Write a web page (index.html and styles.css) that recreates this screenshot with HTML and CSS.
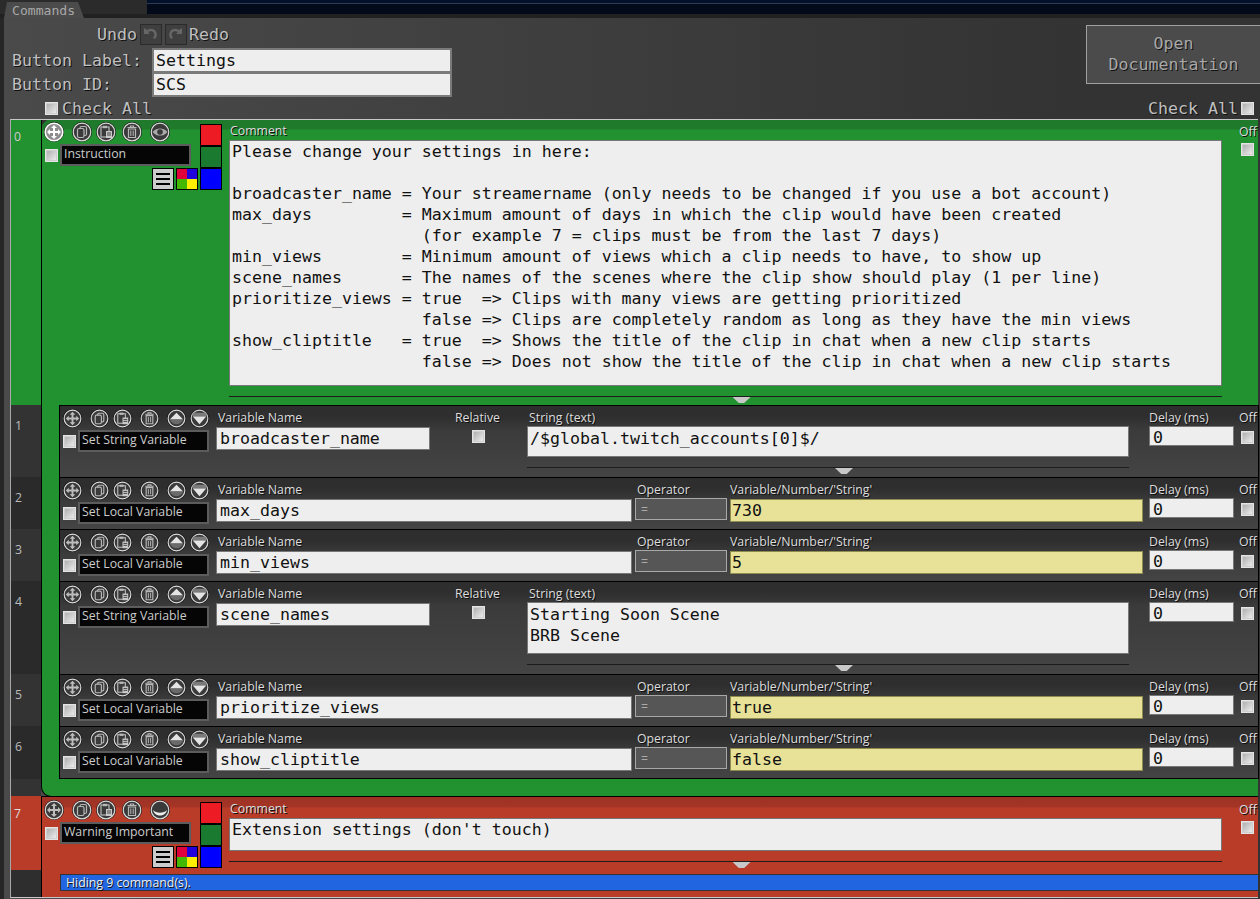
FILE: index.html
```html
<!DOCTYPE html>
<html lang="en">
<head>
    <meta charset="UTF-8">
    <title>Commands</title>
    <link rel="stylesheet" href="styles.css">
</head>
<body>
    <svg class="defs" width="0" height="0">
        <defs>
            <g id="base">
                <circle cx="10" cy="10" r="10" fill="#111"/>
                <circle cx="10" cy="10" r="8.800" fill="#3a3a3a" stroke="#dcdcdc" stroke-width="1.200"/>
            </g>
            <symbol id="i-move" viewBox="0 0 20 20">
                <use href="#base"/>
                <path d="M10 3l3 3h-2v3h3V7l3 3-3 3v-2h-3v3h2l-3 3-3-3h2v-3H6v2l-3-3 3-3v2h3V6H7z" fill="#bdbdbd"/>
            </symbol>
            <symbol id="i-move-on" viewBox="0 0 20 20">
                <circle cx="10" cy="10" r="10" fill="#111"/>
                <circle cx="10" cy="10" r="8.800" fill="#8d8d8d" stroke="#fff" stroke-width="1.600"/>
                <path d="M10 3l3 3h-2v3h3V7l3 3-3 3v-2h-3v3h2l-3 3-3-3h2v-3H6v2l-3-3 3-3v2h3V6H7z" fill="#fff"/>
            </symbol>
            <symbol id="i-copy" viewBox="0 0 20 20">
                <use href="#base"/>
                <rect x="8" y="4.500" width="6.500" height="9" rx="1.500" fill="none" stroke="#b8b8b8" stroke-width="1.200"/>
                <rect x="5.500" y="6.500" width="6.500" height="9" rx="1.500" fill="#3a3a3a" stroke="#b8b8b8" stroke-width="1.200"/>
            </symbol>
            <symbol id="i-paste" viewBox="0 0 20 20">
                <use href="#base"/>
                <rect x="5" y="5" width="8" height="10" fill="none" stroke="#b8b8b8" stroke-width="1.200"/>
                <rect x="7" y="3.800" width="4" height="2.400" fill="#b8b8b8"/>
                <rect x="10" y="9" width="6" height="7" fill="#c8c8c8"/>
                <path d="M11 11h4M11 13h4" stroke="#444"/>
            </symbol>
            <symbol id="i-trash" viewBox="0 0 20 20">
                <use href="#base"/>
                <path d="M8.500 5V4h3v1M5.500 5.500h9" fill="none" stroke="#b8b8b8" stroke-width="1.200"/>
                <path d="M6.500 7h7v8.500h-7z" fill="none" stroke="#b8b8b8" stroke-width="1.200"/>
                <path d="M8.800 8.500v5.500M11.200 8.500v5.500" stroke="#b8b8b8"/>
            </symbol>
            <symbol id="i-eye" viewBox="0 0 20 20">
                <use href="#base"/>
                <path d="M2.500 10C5 7 7.500 6.500 10 6.500s5 .5 7.500 3.500c-2.500 3-5 3.500-7.500 3.500s-5-.5-7.500-3.500z" fill="#aaa"/>
                <circle cx="10" cy="10" r="2.800" fill="#3a3a3a"/>
            </symbol>
            <symbol id="i-fold" viewBox="0 0 20 20">
                <use href="#base"/>
                <path d="M3 10c3 3.500 11 3.500 14 0-1 4-4 5.500-7 5.500s-6-1.500-7-5.500z" fill="#eee"/>
            </symbol>
            <symbol id="i-up" viewBox="0 0 20 20">
                <use href="#base"/>
                <path d="M10 4l7 7H3z" fill="#e4e4e4"/>
                <path d="M3 11h14c-1 3-4 5-7 5s-6-2-7-5z" fill="#6a6a6a"/>
            </symbol>
            <symbol id="i-down" viewBox="0 0 20 20">
                <use href="#base"/>
                <path d="M3 4h14c.5 1.500.5 3 0 4H3c-.5-1-.5-2.500 0-4z" fill="#7a7a7a"/>
                <path d="M3 8h14l-7 8z" fill="#e4e4e4"/>
            </symbol>
        </defs>
    </svg>

    <div class="topbar">
        <div class="tab">Commands</div>
        <div class="topbar-right"></div>
    </div>

    <div class="panel">
        <div class="header">
            <div class="header-left">
                <div class="undo-row">
                    <span class="mono-label">Undo</span>
                    <span class="hist-btn"><svg width="17" height="17" viewBox="0 0 17 17"><path d="M2 2v6h6L6 6c2-1.500 5-1 6 1 .7 1.500.3 3-1 5l2 1c2-2.500 2.500-5 1-7.500C12 2 8 2 5 4z" fill="#666"/></svg></span>
                    <span class="hist-btn"><svg width="17" height="17" viewBox="0 0 17 17"><path d="M15 2v6H9l2-2C9 4.500 6 5 5 7c-.7 1.500-.3 3 1 5l-2 1C2 10.500 1.500 8 3 5.500 5 2 9 2 12 4z" fill="#666"/></svg></span>
                    <span class="mono-label">Redo</span>
                </div>
                <div class="name-row">
                    <span class="mono-label name-label">Button Label:</span>
                    <div class="name-input">Settings</div>
                </div>
                <div class="name-row">
                    <span class="mono-label name-label">Button ID:</span>
                    <div class="name-input">SCS</div>
                </div>
                <div class="check-all">
                    <input type="checkbox" class="check">
                    <span class="mono-label">Check All</span>
                </div>
            </div>
            <div class="header-right">
                <div class="doc-btn">Open<br>Documentation</div>
                <div class="check-all">
                    <span class="mono-label">Check All</span>
                    <input type="checkbox" class="check">
                </div>
            </div>
        </div>

        <div class="cmd-list">
            <div class="row">
                <div class="num num-green">0</div>
                <div class="main main-green">
                    <span class="corner"></span>
                    <div class="main-top">
                        <div class="tools-main">
                            <div class="icons icons-main">
                                <svg class="ic"><use href="#i-move-on"/></svg>
                                <svg class="ic sep"><use href="#i-copy"/></svg>
                                <svg class="ic"><use href="#i-paste"/></svg>
                                <svg class="ic sep2"><use href="#i-trash"/></svg>
                                <svg class="ic sep"><use href="#i-eye"/></svg>
                            </div>
                            <div class="type-row">
                                <input type="checkbox" class="check">
                                <div class="type-select">Instruction</div>
                            </div>
                            <div class="style-row">
                                <span class="menu-btn"><i></i><i></i><i></i></span>
                                <span class="color-grid"><i class="c1"></i><i class="c2"></i><i class="c3"></i><i class="c4"></i></span>
                            </div>
                        </div>
                        <div class="swatches">
                            <span class="sw sw-red"></span>
                            <span class="sw sw-green"></span>
                            <span class="sw sw-blue"></span>
                        </div>
                        <div class="comment">
                            <div class="label">Comment</div>
                            <div class="text-box box-long">Please change your settings in here:

broadcaster_name = Your streamername (only needs to be changed if you use a bot account)
max_days         = Maximum amount of days in which the clip would have been created
                   (for example 7 = clips must be from the last 7 days)
min_views        = Minimum amount of views which a clip needs to have, to show up
scene_names      = The names of the scenes where the clip show should play (1 per line)
prioritize_views = true  =&gt; Clips with many views are getting prioritized
                   false =&gt; Clips are completely random as long as they have the min views
show_cliptitle   = true  =&gt; Shows the title of the clip in chat when a new clip starts
                   false =&gt; Does not show the title of the clip in chat when a new clip starts</div>
                            <div class="divider"></div>
                        </div>
                        <div class="off off-main">
                            <div class="label">Off</div>
                            <input type="checkbox" class="check">
                        </div>
                    </div>
                </div>
            </div>

            <div class="row">
                <div class="num num-a">1</div>
                <div class="gutter"></div>
                <div class="sub">
                    <div class="tools">
                        <div class="icons">
                            <svg class="ic-s"><use href="#i-move"/></svg>
                            <svg class="ic-s sep"><use href="#i-copy"/></svg>
                            <svg class="ic-s"><use href="#i-paste"/></svg>
                            <svg class="ic-s sep"><use href="#i-trash"/></svg>
                            <svg class="ic-s sep"><use href="#i-up"/></svg>
                            <svg class="ic-s"><use href="#i-down"/></svg>
                        </div>
                        <div class="type-row">
                            <input type="checkbox" class="check">
                            <div class="type-select">Set String Variable</div>
                        </div>
                    </div>
                    <div class="field f-var-short">
                        <div class="label">Variable Name</div>
                        <div class="input">broadcaster_name</div>
                    </div>
                    <div class="field f-relative">
                        <div class="label">Relative</div>
                        <input type="checkbox" class="check">
                    </div>
                    <div class="field f-string">
                        <div class="label">String (text)</div>
                        <div class="text-box">/$global.twitch_accounts[0]$/</div>
                        <div class="divider"></div>
                    </div>
                    <div class="field f-delay">
                        <div class="label">Delay (ms)</div>
                        <div class="input delay-input">0</div>
                    </div>
                    <div class="off">
                        <div class="label">Off</div>
                        <input type="checkbox" class="check">
                    </div>
                </div>
            </div>

            <div class="row">
                <div class="num num-b">2</div>
                <div class="gutter"></div>
                <div class="sub">
                    <div class="tools">
                        <div class="icons">
                            <svg class="ic-s"><use href="#i-move"/></svg>
                            <svg class="ic-s sep"><use href="#i-copy"/></svg>
                            <svg class="ic-s"><use href="#i-paste"/></svg>
                            <svg class="ic-s sep"><use href="#i-trash"/></svg>
                            <svg class="ic-s sep"><use href="#i-up"/></svg>
                            <svg class="ic-s"><use href="#i-down"/></svg>
                        </div>
                        <div class="type-row">
                            <input type="checkbox" class="check">
                            <div class="type-select">Set Local Variable</div>
                        </div>
                    </div>
                    <div class="field f-var">
                        <div class="label">Variable Name</div>
                        <div class="input">max_days</div>
                    </div>
                    <div class="field f-op">
                        <div class="label">Operator</div>
                        <div class="op-select">=</div>
                    </div>
                    <div class="field f-value">
                        <div class="label">Variable/Number/'String'</div>
                        <div class="input input-yellow">730</div>
                    </div>
                    <div class="field f-delay">
                        <div class="label">Delay (ms)</div>
                        <div class="input delay-input">0</div>
                    </div>
                    <div class="off">
                        <div class="label">Off</div>
                        <input type="checkbox" class="check">
                    </div>
                </div>
            </div>

            <div class="row">
                <div class="num num-a">3</div>
                <div class="gutter"></div>
                <div class="sub">
                    <div class="tools">
                        <div class="icons">
                            <svg class="ic-s"><use href="#i-move"/></svg>
                            <svg class="ic-s sep"><use href="#i-copy"/></svg>
                            <svg class="ic-s"><use href="#i-paste"/></svg>
                            <svg class="ic-s sep"><use href="#i-trash"/></svg>
                            <svg class="ic-s sep"><use href="#i-up"/></svg>
                            <svg class="ic-s"><use href="#i-down"/></svg>
                        </div>
                        <div class="type-row">
                            <input type="checkbox" class="check">
                            <div class="type-select">Set Local Variable</div>
                        </div>
                    </div>
                    <div class="field f-var">
                        <div class="label">Variable Name</div>
                        <div class="input">min_views</div>
                    </div>
                    <div class="field f-op">
                        <div class="label">Operator</div>
                        <div class="op-select">=</div>
                    </div>
                    <div class="field f-value">
                        <div class="label">Variable/Number/'String'</div>
                        <div class="input input-yellow">5</div>
                    </div>
                    <div class="field f-delay">
                        <div class="label">Delay (ms)</div>
                        <div class="input delay-input">0</div>
                    </div>
                    <div class="off">
                        <div class="label">Off</div>
                        <input type="checkbox" class="check">
                    </div>
                </div>
            </div>

            <div class="row">
                <div class="num num-b">4</div>
                <div class="gutter"></div>
                <div class="sub">
                    <div class="tools">
                        <div class="icons">
                            <svg class="ic-s"><use href="#i-move"/></svg>
                            <svg class="ic-s sep"><use href="#i-copy"/></svg>
                            <svg class="ic-s"><use href="#i-paste"/></svg>
                            <svg class="ic-s sep"><use href="#i-trash"/></svg>
                            <svg class="ic-s sep"><use href="#i-up"/></svg>
                            <svg class="ic-s"><use href="#i-down"/></svg>
                        </div>
                        <div class="type-row">
                            <input type="checkbox" class="check">
                            <div class="type-select">Set String Variable</div>
                        </div>
                    </div>
                    <div class="field f-var-short">
                        <div class="label">Variable Name</div>
                        <div class="input">scene_names</div>
                    </div>
                    <div class="field f-relative">
                        <div class="label">Relative</div>
                        <input type="checkbox" class="check">
                    </div>
                    <div class="field f-string">
                        <div class="label">String (text)</div>
                        <div class="text-box">Starting Soon Scene
BRB Scene</div>
                        <div class="divider"></div>
                    </div>
                    <div class="field f-delay">
                        <div class="label">Delay (ms)</div>
                        <div class="input delay-input">0</div>
                    </div>
                    <div class="off">
                        <div class="label">Off</div>
                        <input type="checkbox" class="check">
                    </div>
                </div>
            </div>

            <div class="row">
                <div class="num num-a">5</div>
                <div class="gutter"></div>
                <div class="sub">
                    <div class="tools">
                        <div class="icons">
                            <svg class="ic-s"><use href="#i-move"/></svg>
                            <svg class="ic-s sep"><use href="#i-copy"/></svg>
                            <svg class="ic-s"><use href="#i-paste"/></svg>
                            <svg class="ic-s sep"><use href="#i-trash"/></svg>
                            <svg class="ic-s sep"><use href="#i-up"/></svg>
                            <svg class="ic-s"><use href="#i-down"/></svg>
                        </div>
                        <div class="type-row">
                            <input type="checkbox" class="check">
                            <div class="type-select">Set Local Variable</div>
                        </div>
                    </div>
                    <div class="field f-var">
                        <div class="label">Variable Name</div>
                        <div class="input">prioritize_views</div>
                    </div>
                    <div class="field f-op">
                        <div class="label">Operator</div>
                        <div class="op-select">=</div>
                    </div>
                    <div class="field f-value">
                        <div class="label">Variable/Number/'String'</div>
                        <div class="input input-yellow">true</div>
                    </div>
                    <div class="field f-delay">
                        <div class="label">Delay (ms)</div>
                        <div class="input delay-input">0</div>
                    </div>
                    <div class="off">
                        <div class="label">Off</div>
                        <input type="checkbox" class="check">
                    </div>
                </div>
            </div>

            <div class="row">
                <div class="num num-b">6</div>
                <div class="gutter"></div>
                <div class="sub sub-last">
                    <div class="tools">
                        <div class="icons">
                            <svg class="ic-s"><use href="#i-move"/></svg>
                            <svg class="ic-s sep"><use href="#i-copy"/></svg>
                            <svg class="ic-s"><use href="#i-paste"/></svg>
                            <svg class="ic-s sep"><use href="#i-trash"/></svg>
                            <svg class="ic-s sep"><use href="#i-up"/></svg>
                            <svg class="ic-s"><use href="#i-down"/></svg>
                        </div>
                        <div class="type-row">
                            <input type="checkbox" class="check">
                            <div class="type-select">Set Local Variable</div>
                        </div>
                    </div>
                    <div class="field f-var">
                        <div class="label">Variable Name</div>
                        <div class="input">show_cliptitle</div>
                    </div>
                    <div class="field f-op">
                        <div class="label">Operator</div>
                        <div class="op-select">=</div>
                    </div>
                    <div class="field f-value">
                        <div class="label">Variable/Number/'String'</div>
                        <div class="input input-yellow">false</div>
                    </div>
                    <div class="field f-delay">
                        <div class="label">Delay (ms)</div>
                        <div class="input delay-input">0</div>
                    </div>
                    <div class="off">
                        <div class="label">Off</div>
                        <input type="checkbox" class="check">
                    </div>
                </div>
            </div>

            <div class="row row-tail">
                <div class="num num-a"></div>
                <div class="tail"></div>
            </div>

            <div class="row">
                <div class="num num-a num-split"><div class="num-red">7</div></div>
                <div class="main main-red">
                    <div class="main-top">
                        <div class="tools-main">
                            <div class="icons icons-main">
                                <svg class="ic"><use href="#i-move"/></svg>
                                <svg class="ic sep"><use href="#i-copy"/></svg>
                                <svg class="ic"><use href="#i-paste"/></svg>
                                <svg class="ic sep2"><use href="#i-trash"/></svg>
                                <svg class="ic sep"><use href="#i-fold"/></svg>
                            </div>
                            <div class="type-row">
                                <input type="checkbox" class="check">
                                <div class="type-select">Warning Important</div>
                            </div>
                            <div class="style-row">
                                <span class="menu-btn"><i></i><i></i><i></i></span>
                                <span class="color-grid"><i class="c1"></i><i class="c2"></i><i class="c3"></i><i class="c4"></i></span>
                            </div>
                        </div>
                        <div class="swatches">
                            <span class="sw sw-red"></span>
                            <span class="sw sw-green"></span>
                            <span class="sw sw-blue"></span>
                        </div>
                        <div class="comment">
                            <div class="label">Comment</div>
                            <div class="text-box box-mid">Extension settings (don't touch)</div>
                            <div class="divider"></div>
                        </div>
                        <div class="off off-main">
                            <div class="label">Off</div>
                            <input type="checkbox" class="check">
                        </div>
                    </div>
                    <div class="hiding">Hiding 9 command(s).</div>
                </div>
            </div>
        </div>
    </div>
</body>
</html>
```

FILE: styles.css
```css
* {
    box-sizing: border-box;
}
html, body {
    margin: 0;
    height: 100%;
    overflow: hidden;
}
body {
    width: 1260px;
    height: 899px;
    background-color: #262626;
    font-family: "Open Sans", sans-serif;
    font-size: 12.3px;
    color: #ccc;
}
.defs {
    position: absolute;
}

/* top strip */
.topbar {
    display: flex;
    height: 18px;
    background: linear-gradient(#2b2b2b 0, #2b2b2b 14px, #212121 14px);
    position: relative;
}
.tab {
    width: 80px;
    height: 16px;
    margin: 2px 0 0 4px;
    padding-left: 8px;
    background-color: #4b4b4b;
    clip-path: polygon(3px 0, 74px 0, 80px 100%, 0 100%);
    font-family: "DejaVu Sans Mono", monospace;
    font-size: 13.1px;
    line-height: 17px;
    color: #a8a8a8;
}
.topbar-right {
    position: absolute;
    left: 147px;
    right: 0;
    top: 0;
    height: 14px;
    background: linear-gradient(#03102a 0, #03102a 3px, #2c3c52 3px, #2c3c52 4px, #030a1a 4px);
}

/* panel */
.panel {
    height: 881px;
    margin-left: 4px;
    padding-left: 6px;
    background: linear-gradient(to right, #4a4a4a, #333 85%);
}
.header {
    display: flex;
    justify-content: space-between;
    height: 101px;
    margin-left: -6px;
}
.header-left {
    padding-left: 8px;
}
.mono-label {
    font-family: "DejaVu Sans Mono", monospace;
    font-size: 16.6px;
    color: #c0c0c0;
    text-shadow: 1px 1px 0 #111;
}
.undo-row {
    display: flex;
    align-items: center;
    gap: 3px;
    height: 21px;
    margin: 6px 0 3px 85px;
}
.undo-row .hist-btn + .mono-label {
    margin-left: -1px;
}
.hist-btn {
    display: flex;
    align-items: center;
    justify-content: center;
    width: 22px;
    height: 21px;
    background-color: #3f3f3f;
    border: 1px solid #2b2b2b;
}
.name-row {
    display: flex;
    align-items: center;
    height: 24px;
}
.name-label {
    width: 141px;
    margin-right: -1px;
}
.name-input {
    width: 300px;
    height: 25px;
    margin-bottom: -1px;
    padding-left: 2px;
    background-color: #eee;
    border: 2px solid #7a7a7a;
    font-family: "DejaVu Sans Mono", monospace;
    font-size: 16.6px;
    line-height: 21px;
    color: #111;
}
.check-all {
    display: flex;
    align-items: center;
    gap: 4px;
    height: 21px;
    margin: 2px 0 0 33px;
}
.header-right {
    display: flex;
    flex-direction: column;
    align-items: flex-end;
}
.doc-btn {
    width: 174px;
    height: 59px;
    margin-top: 7px;
    padding-top: 7px;
    background-color: #4b4b4b;
    border: 1px solid #a0a0a0;
    border-right: 0;
    font-family: "DejaVu Sans Mono", monospace;
    font-size: 16.6px;
    line-height: 21px;
    text-align: center;
    color: #a8a8a8;
    text-shadow: 1px 1px 0 #111;
}
.header-right .check-all {
    margin: 14px 6px 0 0;
    gap: 3px;
}
.check {
    appearance: none;
    display: block;
    flex: none;
    width: 13px;
    height: 13px;
    margin: 0;
    background: linear-gradient(135deg, #a9a9a9, #f2f2f2);
    border: 1px solid #e4e4e4;
    box-shadow: inset 0 0 0 1px #cfcfcf;
}

/* command list */
.cmd-list {
    width: 1248px;
    border-top: 1px solid #c8c8c8;
    border-left: 1px solid #a8a8a8;
    border-bottom: 1px solid #c8c8c8;
}
.row {
    display: flex;
}
.num {
    flex: none;
    width: 30px;
    padding: 14px 0 0 4px;
    line-height: 14px;
    color: #bbb;
}
.num-green {
    background-color: #22912f;
    color: #ccc;
    padding: 10px 0 0 3px;
}
.num-a {
    background-color: #333;
}
.num-b {
    background-color: #2a2a2a;
}
.num-split {
    padding: 0;
    background-color: #2e2e2e;
}
.num-red {
    height: 74px;
    padding: 11px 0 0 3px;
    background-color: #b93c29;
    color: #ddd;
}
.main {
    position: relative;
    flex: 1;
    border-left: 1px solid #000;
    padding: 2px 0 0 2px;
}
.main-green {
    background: linear-gradient(#1f7a2b 0, #1f7a2b 9px, #22912f 10px);
}
.main-red {
    padding-top: 3px;
    padding-bottom: 6px;
    border-top: 1px solid #000;
    background: linear-gradient(#9c3225 0, #a53526 10px, #b93c29 11px);
}
.corner {
    position: absolute;
    left: 0;
    top: 0;
    width: 5px;
    height: 5px;
    background-color: #333;
    clip-path: polygon(0 0, 100% 0, 0 100%);
}
.main-top {
    display: flex;
}
.tools-main {
    flex: none;
    width: 156px;
}
.icons {
    display: flex;
    gap: 4px;
}
.icons-main {
    height: 20px;
}
.ic {
    width: 20px;
    height: 20px;
}
.ic-s {
    width: 19px;
    height: 19px;
}
.sep {
    margin-left: 4px;
}
.sep2 {
    margin-left: 2px;
}
.type-row {
    display: flex;
    align-items: center;
    gap: 2px;
    margin-top: 2px;
}
.tools-main .type-row {
    padding-left: 1px;
}
.type-select {
    width: 131px;
    height: 22px;
    padding-left: 2px;
    background-color: #050505;
    border: 2px solid #5c5c5c;
    line-height: 16px;
    color: #ccc;
    white-space: nowrap;
}
.style-row {
    display: flex;
    justify-content: flex-end;
    gap: 2px;
    margin-top: 2px;
    padding-right: 2px;
}
.menu-btn {
    display: flex;
    flex-direction: column;
    justify-content: center;
    gap: 3px;
    width: 22px;
    height: 22px;
    padding: 0 3px;
    background-color: #ccc;
    border: 1px solid #000;
}
.menu-btn i {
    display: block;
    height: 2px;
    background-color: #000;
}
.color-grid {
    display: grid;
    grid-template-columns: 1fr 1fr;
    width: 22px;
    height: 22px;
    border: 1px solid #000;
}
.c1 { background-color: #e0003c; }
.c2 { background-color: #2200dd; }
.c3 { background-color: #44b800; }
.c4 { background-color: #ffee00; }
.swatches {
    display: flex;
    flex-direction: column;
    flex: none;
    width: 22px;
    margin-top: 2px;
}
.sw {
    display: block;
    height: 22px;
    border: 1px solid #000;
}
.sw-red { background-color: #ed1c24; }
.sw-green { background-color: #1a7a30; }
.sw-blue { background-color: #0000ff; }
.comment {
    flex: none;
    width: 993px;
    margin-left: 7px;
    padding-bottom: 8px;
}
.label {
    height: 14px;
    line-height: 14px;
    color: #ddd;
    text-shadow: 1px 1px 0 #111;
    white-space: nowrap;
}
.comment .label {
    margin-top: 2px;
    padding-left: 1px;
}
.text-box {
    margin-top: 2px;
    padding: 1px 2px 7px;
    background-color: #eee;
    border: 1px solid #777;
    font-family: "DejaVu Sans Mono", monospace;
    font-size: 16.6px;
    line-height: 21px;
    color: #111;
    white-space: pre;
    overflow: hidden;
}
.comment .text-box {
    margin-top: 2px;
    padding-top: 0;
}
.box-long {
    padding-bottom: 13px;
}
.box-mid {
    padding-bottom: 10px;
}
.divider {
    position: relative;
    height: 1px;
    margin-top: 10px;
    background-color: #1c1c1c;
}
.divider::after {
    content: "";
    position: absolute;
    left: calc(50% + 7px);
    top: 1px;
    width: 18px;
    height: 6px;
    background-color: #c8c8c8;
    clip-path: polygon(0 0, 100% 0, 65% 100%, 35% 100%);
}
.off {
    flex: none;
    width: 19px;
}
.off .label {
    margin-top: 2px;
}
.off .check {
    margin: 6px 0 0 2px;
}
.off-main {
    margin-left: 17px;
}
.off-main .label {
    margin-top: 3px;
}
.off-main .check {
    margin-top: 4px;
    margin-left: 2px;
}

/* nested rows */
.gutter {
    flex: none;
    width: 18px;
    background-color: #22912f;
    border-left: 1px solid #000;
}
.sub {
    display: flex;
    flex: 1;
    min-height: 52px;
    padding: 3px 0 0 3px;
    background: linear-gradient(#2e2e2e 0, #2e2e2e 10px, #3b3b3b 24px, #444 100%);
    border-top: 1px solid #000;
    border-left: 1px solid #000;
    border-right: 1px solid #000;
}
.sub-last {
    min-height: 53px;
    border-bottom: 1px solid #000;
}
.tools {
    flex: none;
    width: 153px;
}
.field {
    flex: none;
    margin-top: 2px;
}
.field .label {
    padding-left: 2px;
}
.input {
    height: 23px;
    margin-top: 2px;
    padding-left: 3px;
    background-color: #eee;
    border: 1px solid #777;
    font-family: "DejaVu Sans Mono", monospace;
    font-size: 16.6px;
    line-height: 21px;
    color: #111;
    white-space: nowrap;
}
.f-var-short { width: 214px; }
.f-relative {
    width: 97px;
}
.f-relative .label {
    padding-left: 25px;
}
.f-relative .check {
    margin: 5px 0 0 42px;
}
.f-string {
    width: 602px;
    padding-bottom: 9px;
}
.f-string .text-box {
    margin-top: 1px;
}
.f-var { width: 416px; }
.f-op {
    width: 92px;
    margin-left: 3px;
}
.op-select {
    height: 22px;
    margin-top: 1px;
    padding-left: 5px;
    background-color: #565656;
    border: 1px solid #a8a8a8;
    line-height: 22px;
    color: #aaa;
}
.f-value {
    width: 413px;
    margin-left: 3px;
}
.f-value .label {
    padding-left: 0;
}
.input-yellow {
    padding-left: 1px;
    background-color: #e8e298;
    border-color: #8f8c50;
}
.f-delay {
    width: 85px;
    margin-left: 6px;
}
.f-string + .f-delay {
    margin-left: 20px;
}
.f-delay .label {
    padding-left: 0;
}
.delay-input {
    height: 20px;
    margin-top: 1px;
    line-height: 21px;
}
.sub .off {
    margin-left: 5px;
}
.row-tail {
    height: 17px;
}
.row-tail .num {
    padding: 0;
}
.tail {
    flex: 1;
    margin-bottom: -1px;
    background-color: #22912f;
    border-left: 1px solid #000;
    border-bottom: 1px solid #000;
    border-bottom-left-radius: 10px;
}
.hiding {
    height: 17px;
    margin: 4px 0 0 16px;
    padding-left: 5px;
    background-color: #2166e0;
    border: 1px solid #333;
    border-right: 0;
    line-height: 15px;
    color: #eee;
    text-shadow: 1px 1px 0 #111;
}
```
